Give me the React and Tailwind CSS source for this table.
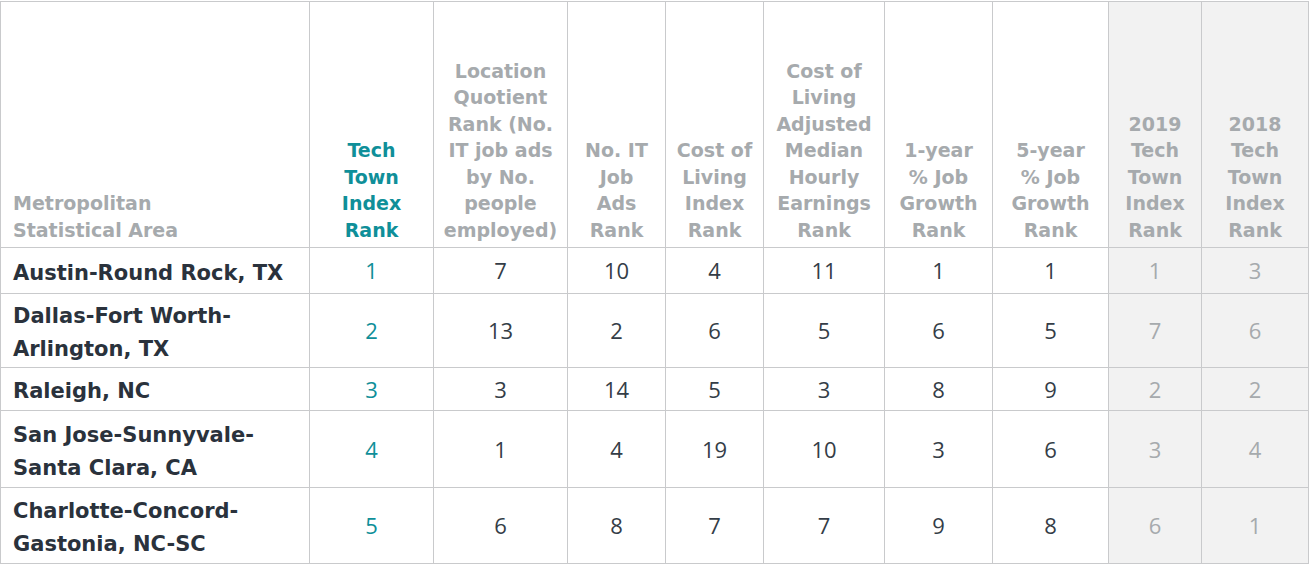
const headers = [
  { lines: ["Metropolitan", "Statistical Area"], align: "left" },
  { lines: ["Tech", "Town", "Index", "Rank"], teal: true },
  { lines: ["Location", "Quotient", "Rank (No.", "IT job ads", "by No.", "people", "employed)"] },
  { lines: ["No. IT", "Job", "Ads", "Rank"] },
  { lines: ["Cost of", "Living", "Index", "Rank"] },
  { lines: ["Cost of", "Living", "Adjusted", "Median", "Hourly", "Earnings", "Rank"] },
  { lines: ["1-year", "% Job", "Growth", "Rank"] },
  { lines: ["5-year", "% Job", "Growth", "Rank"] },
  { lines: ["2019", "Tech", "Town", "Index", "Rank"], shade: true },
  { lines: ["2018", "Tech", "Town", "Index", "Rank"], shade: true },
];

const widths = [309, 124, 134, 98, 98, 121, 108, 116, 93, 107];

const rows = [
  { name: ["Austin-Round Rock, TX"], h: "h-[46px]", vals: [1, 7, 10, 4, 11, 1, 1, 1, 3] },
  { name: ["Dallas-Fort Worth-", "Arlington, TX"], h: "h-[74px]", vals: [2, 13, 2, 6, 5, 6, 5, 7, 6] },
  { name: ["Raleigh, NC"], h: "h-[43px]", vals: [3, 3, 14, 5, 3, 8, 9, 2, 2] },
  { name: ["San Jose-Sunnyvale-", "Santa Clara, CA"], h: "h-[77px]", vals: [4, 1, 4, 19, 10, 3, 6, 3, 4] },
  { name: ["Charlotte-Concord-", "Gastonia, NC-SC"], h: "h-[76px]", vals: [5, 6, 8, 7, 7, 9, 8, 6, 1] },
];

function Lines({ lines }) {
  return lines.map((l, i) => (
    <span key={i} className="block">
      {l}
    </span>
  ));
}

export default function App() {
  return (
    <div className="bg-white w-[1310px] h-[565px] pt-px font-['DejaVu_Sans',sans-serif]">
      <table className="table-fixed border-collapse w-[1309px]">
        <colgroup>
          {widths.map((w, i) => (
            <col key={i} style={{ width: w }} />
          ))}
        </colgroup>
        <thead>
          <tr className="h-[246px]">
            {headers.map((h, i) => (
              <th
                key={i}
                className={
                  "border border-[#c9cacc] align-bottom pb-[4px] text-[19px] leading-[26.5px] font-bold " +
                  (h.align === "left" ? "text-left pl-3 " : "text-center ") +
                  (h.teal ? "text-[#0f8f99] " : "text-[#a6aaad] ") +
                  (h.shade ? "bg-[#f2f2f2]" : "")
                }
              >
                <Lines lines={h.lines} />
              </th>
            ))}
          </tr>
        </thead>
        <tbody>
          {rows.map((r, ri) => (
            <tr key={ri} className={r.h}>
              <td className="border border-[#c9cacc] pl-3 pt-[5px] align-middle text-[21px] leading-[33px] font-bold text-[#2a323c]">
                <Lines lines={r.name} />
              </td>
              {r.vals.map((v, vi) => (
                <td
                  key={vi}
                  className={
                    "border border-[#c9cacc] text-center align-middle font-['Open_Sans',sans-serif] text-[22px] " +
                    (vi === 0
                      ? "text-[#0f8f99]"
                      : vi >= 7
                      ? "text-[#a6aaad] bg-[#f2f2f2]"
                      : "text-[#343d47]")
                  }
                >
                  {v}
                </td>
              ))}
            </tr>
          ))}
        </tbody>
      </table>
    </div>
  );
}
